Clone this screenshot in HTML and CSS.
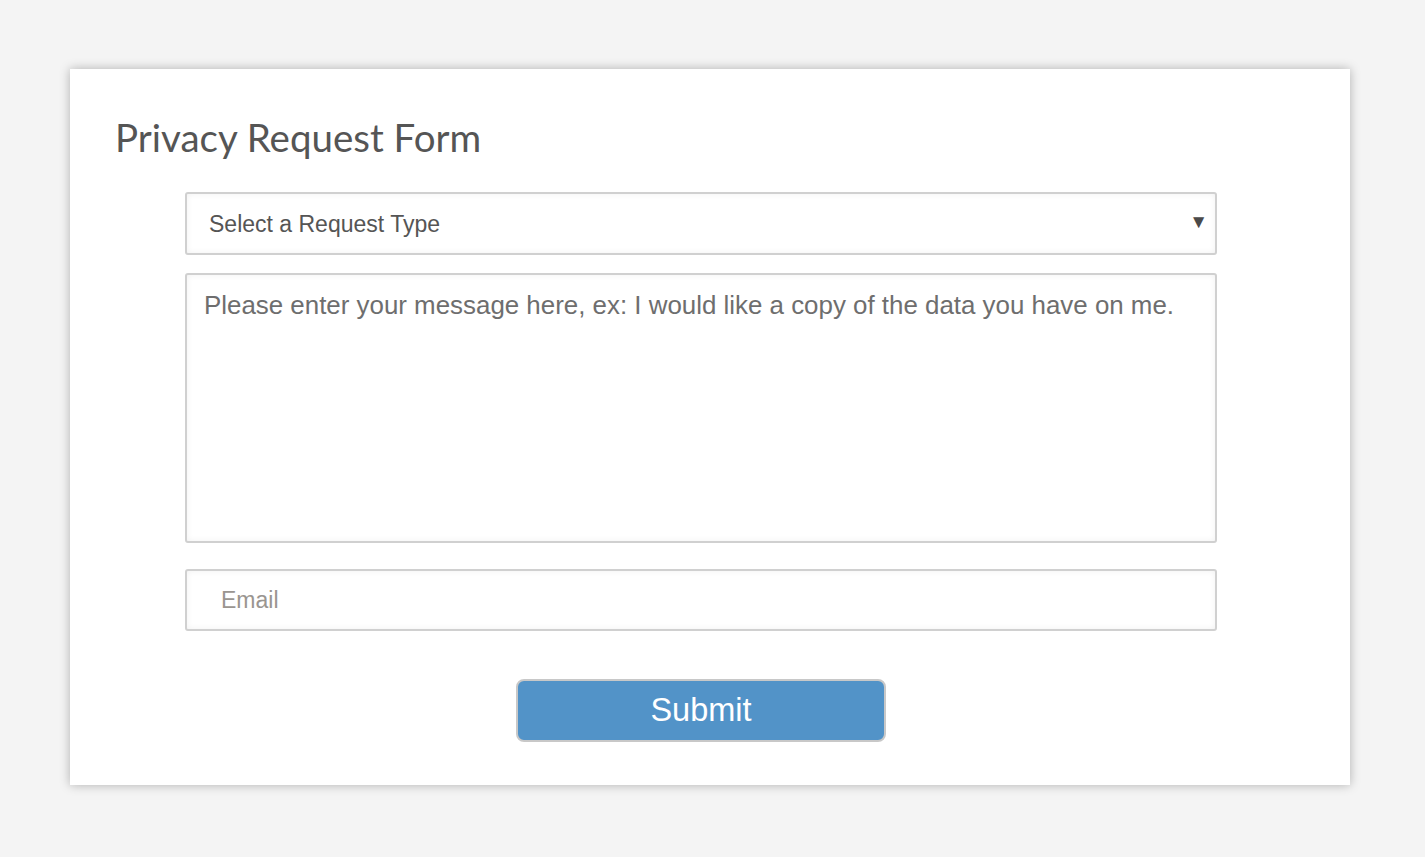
FILE: index.html
```html
<!DOCTYPE html>
<html>
<head>
<meta charset="utf-8">
<link rel="stylesheet" href="styles.css">
</head>
<body>
<div class="card">
  <h1 class="title">Privacy Request Form</h1>
  <form class="form">
    <div class="select">
      <span class="select-text">Select a Request Type</span>
      <span class="arrow">▼</span>
    </div>
    <textarea class="message" placeholder="Please enter your message here, ex: I would like a copy of the data you have on me."></textarea>
    <input class="email" type="text" placeholder="Email">
    <div class="actions">
      <button type="button" class="submit">Submit</button>
    </div>
  </form>
</div>
</body>
</html>
```

FILE: styles.css
```css
html, body {
  margin: 0;
  padding: 0;
  background: #f4f4f4;
}
body {
  padding: 69px 75px 72px 70px;
  font-family: "Liberation Sans", Arial, sans-serif;
}
.card {
  background: #fff;
  height: 716px;
  box-sizing: border-box;
  box-shadow: 0 0 10px rgba(0,0,0,0.28);
  padding: 45px 0 0 45px;
}
.title {
  margin: 0;
  font-family: Lato, "Open Sans", sans-serif;
  font-weight: 400;
  font-size: 38.5px;
  line-height: 46px;
  color: #555;
}
.form {
  margin: 32px 0 0 70px;
  width: 1032px;
  display: flex;
  flex-direction: column;
}
.select, .message, .email {
  box-sizing: border-box;
  width: 1032px;
  border: 2px solid #d0d0d0;
  border-radius: 3px;
  box-shadow: inset 0 0 6px rgba(0,0,0,0.06);
  background: #fff;
}
.select {
  height: 63px;
  display: flex;
  align-items: center;
  justify-content: space-between;
  padding: 2px 7px 0 22px;
  color: #555;
  font-size: 23px;
}
.arrow {
  font-size: 19px;
  color: #4a4a4a;
  margin-top: -6px;
}
.message {
  margin-top: 18px;
  height: 270px;
  resize: none;
  padding: 16px 17px;
  font-family: "Liberation Sans", Arial, sans-serif;
  font-size: 25.9px;
  color: #555;
  outline: none;
}
.message::placeholder {
  color: #6e6e6e;
}
.email {
  margin-top: 26px;
  height: 62px;
  padding: 0 34px;
  font-family: "Liberation Sans", Arial, sans-serif;
  font-size: 23px;
  outline: none;
}
.email::placeholder {
  color: #9a9590;
}
.actions {
  display: flex;
  justify-content: center;
  margin-top: 48px;
}
.submit {
  width: 370px;
  height: 63px;
  box-sizing: border-box;
  background: #5293c8;
  border: 2px solid #c8c8c8;
  border-radius: 8px;
  color: #fff;
  font-family: "Liberation Sans", Arial, sans-serif;
  font-size: 32.5px;
}
```
